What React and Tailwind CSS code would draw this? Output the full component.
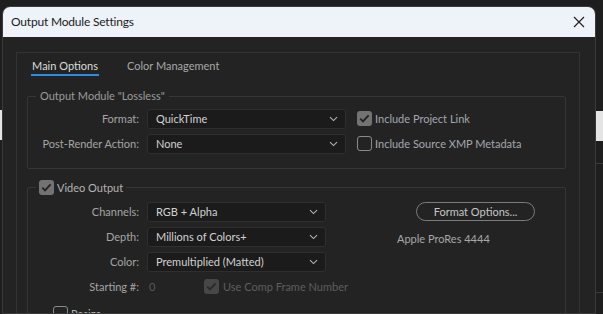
import { useState } from 'react';

function Chevron() {
  return (
    <svg width="9" height="6" viewBox="0 0 9 6" className="shrink-0">
      <path d="M1 1.2 L4.5 4.6 L8 1.2" fill="none" stroke="#b4b4b4" strokeWidth="1.1" />
    </svg>
  );
}

function Select({ value, width }) {
  return (
    <div
      className={`flex h-[20px] items-center justify-between rounded-[3px] border border-[#2f2f2f] bg-[#1b1b1b] pl-[8px] pr-[7px] text-[#d2d2d2] ${width}`}
    >
      <span>{value}</span>
      <Chevron />
    </div>
  );
}

function Check({ checked, dim }) {
  return (
    <span
      className={`flex h-[15px] w-[15px] shrink-0 items-center justify-center rounded-[3px] ${
        checked
          ? dim
            ? 'bg-[#474747]'
            : 'bg-[#737373]'
          : 'border-[1.5px] border-[#8a8a8a]'
      }`}
    >
      {checked && (
        <svg width="11" height="9" viewBox="0 0 11 9">
          <path
            d="M1.3 4.6 L4 7.3 L9.6 1.4"
            fill="none"
            stroke={dim ? '#2a2a2a' : '#232323'}
            strokeWidth="1.9"
          />
        </svg>
      )}
    </span>
  );
}

function Row({ label, children }) {
  return (
    <div className="flex h-[25px] items-center whitespace-nowrap">
      <span className="w-[119px] shrink-0 pr-[8px] text-right text-[#a5a5a5]">{label}</span>
      {children}
    </div>
  );
}

export default function App() {
  const [tab] = useState('main');

  return (
    <div
      className="flex h-[314px] w-[603px] overflow-hidden bg-[#1e1e1e] text-[11px] leading-[12px]"
      style={{ fontFamily: 'Lato, "Noto Sans", sans-serif' }}
    >
      {/* background app behind the dialog, left edge */}
      <div className="flex w-[2px] shrink-0 flex-col pt-[110px]">
        <div className="h-[30px] bg-[#e4e4e4]" />
      </div>

      {/* dialog */}
      <div className="mt-[6px] flex w-[594px] shrink-0 flex-col overflow-hidden rounded-t-[8px] border border-[#3a3a3a] bg-[#232323]">
        <div className="flex h-[30px] shrink-0 items-center justify-between bg-[#eef2f9] pl-[8px] pr-[10px]">
          <span className="text-[12px] tracking-[-0.2px] text-[#1b1b1b]">Output Module Settings</span>
          <svg width="12" height="12" viewBox="0 0 12 12">
            <path d="M1 1 L11 11 M11 1 L1 11" stroke="#222" strokeWidth="1.2" />
          </svg>
        </div>

        <div className="pl-[13px] pt-[15px]">
          <div className="h-[300px] w-[564px] border border-[#333333] px-[10px]">
            {/* tabs */}
            <div className="flex items-start gap-[28px] pl-[4px] pt-[7px]">
              <div className="flex flex-col items-center">
                <span className={tab === 'main' ? 'text-[#dcdcdc]' : ''}>Main Options</span>
                <span className="mt-[2px] h-[2px] w-[68px] bg-[#2d8be6]" />
              </div>
              <span className="text-[#a8a8a8]">Color Management</span>
            </div>

            {/* Output Module group */}
            <fieldset className="mt-[14px] h-[79px] w-[539px] rounded-[2px] border border-[#363636] px-0 pt-[4px]">
              <legend className="ml-[8px] px-[4px] text-[#9c9c9c]">Output Module "Lossless"</legend>
              <div className="flex">
                <div className="flex flex-col">
                  <Row label="Format:">
                    <Select value="QuickTime" width="w-[199px]" />
                  </Row>
                  <Row label="Post-Render Action:">
                    <Select value="None" width="w-[199px]" />
                  </Row>
                </div>
                <div className="ml-[11px] flex flex-col">
                  <div className="flex h-[25px] items-center gap-[3px] text-[#a3a8b0]">
                    <Check checked />
                    <span>Include Project Link</span>
                  </div>
                  <div className="flex h-[25px] items-center gap-[3px] text-[#a3a8b0]">
                    <Check />
                    <span>Include Source XMP Metadata</span>
                  </div>
                </div>
              </div>
            </fieldset>

            {/* Video Output group */}
            <fieldset className="mt-[11px] h-[160px] w-[539px] rounded-[2px] border border-[#363636] px-0 pt-[4px]">
              <legend className="ml-[8px] flex items-center gap-[3px] px-[3px] text-[#b4b4b4]">
                <Check checked />
                <span>Video Output</span>
              </legend>
              <div className="flex">
                <div className="flex w-[298px] shrink-0 flex-col">
                  <Row label="Channels:">
                    <Select value="RGB + Alpha" width="w-[179px]" />
                  </Row>
                  <Row label="Depth:">
                    <Select value="Millions of Colors+" width="w-[179px]" />
                  </Row>
                  <Row label="Color:">
                    <Select value="Premultiplied (Matted)" width="w-[179px]" />
                  </Row>
                  <Row label="Starting #:">
                    <span className="w-[57px] shrink-0 pl-[2px] text-[#5a5a5a]">0</span>
                    <div className="flex items-center gap-[4px] text-[#5e5e5e]">
                      <Check checked dim />
                      <span>Use Comp Frame Number</span>
                    </div>
                  </Row>
                </div>
                <div className="ml-[71px] flex flex-col items-start pt-[3px]">
                  <button className="ml-[19px] flex h-[19px] w-[119px] items-center justify-center rounded-full border border-[#7c7c7c] text-[#c6c6c6]">
                    Format Options...
                  </button>
                  <span className="mt-[12px] text-[#a8a8a8]">Apple ProRes 4444</span>
                </div>
              </div>

              {/* Resize group, cut off at the bottom */}
              <fieldset className="ml-[14px] mt-[7px] h-[40px] w-[508px] border border-[#363636] px-0">
                <legend className="ml-[8px] flex items-center gap-[3px] px-[2px] text-[#b4b4b4]">
                  <Check />
                  <span>Resize</span>
                </legend>
              </fieldset>
            </fieldset>
          </div>
        </div>
      </div>

      {/* background app behind the dialog, right edge */}
      <div className="flex w-[7px] shrink-0 flex-col pt-[111px]">
        <div className="h-[30px] bg-[#e4e4e4]" />
        <div className="mt-[22px] h-px bg-[#3a3a3a]" />
        <div className="mt-[128px] h-px bg-[#3a3a3a]" />
      </div>
    </div>
  );
}
